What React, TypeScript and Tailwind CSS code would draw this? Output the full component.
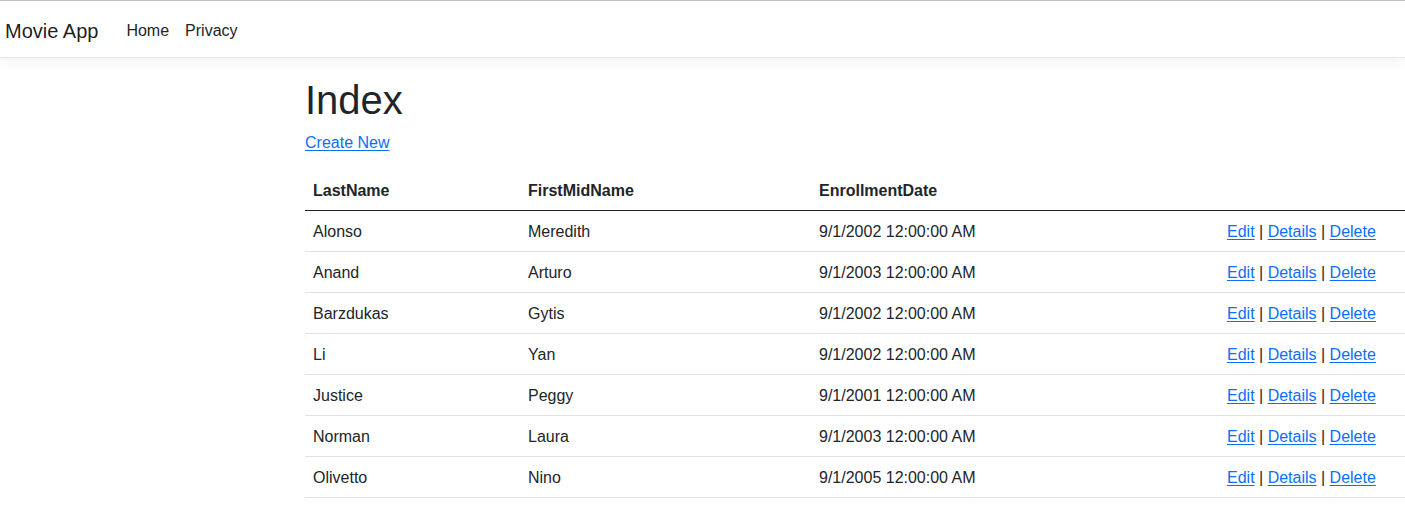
import React from "react";

const rows = [
  ["Alonso", "Meredith", "9/1/2002 12:00:00 AM"],
  ["Anand", "Arturo", "9/1/2003 12:00:00 AM"],
  ["Barzdukas", "Gytis", "9/1/2002 12:00:00 AM"],
  ["Li", "Yan", "9/1/2002 12:00:00 AM"],
  ["Justice", "Peggy", "9/1/2001 12:00:00 AM"],
  ["Norman", "Laura", "9/1/2003 12:00:00 AM"],
  ["Olivetto", "Nino", "9/1/2005 12:00:00 AM"],
];

export default function App() {
  return (
    <div
      className="min-h-[522px] w-[1405px] overflow-hidden bg-white text-[#212529] text-[16px] leading-[24px]"
      style={{ fontFamily: '"Liberation Sans", Arial, sans-serif' }}
    >
      <div className="h-px bg-[#c3c3c3]" />
      <nav className="flex h-[57px] items-center border-b border-[#e5e5e5] bg-white pt-[3px] shadow-[0_4px_12px_rgba(0,0,0,0.05)]">
        <a className="ml-[5px] mr-[20px] text-[20px] leading-[30px] text-[rgba(0,0,0,0.9)]">Movie App</a>
        <a className="px-[8px] text-[#212529]">Home</a>
        <a className="px-[8px] text-[#212529]">Privacy</a>
      </nav>
      <main className="ml-[305px] mt-[16px] w-[1296px]">
        <h1 className="mb-[6px] pt-[2px] text-[40px] leading-[48px] font-medium">Index</h1>
        <p className="mb-[15px] pt-[1px]">
          <a className="text-[#0d6efd] underline underline-offset-2">Create New</a>
        </p>
        <table className="w-[1296px] border-collapse text-left">
          <thead>
            <tr className="border-b border-[#212529]">
              <th className="w-[215px] px-[8px] pt-[9px] pb-[7px] font-bold">LastName</th>
              <th className="w-[291px] px-[8px] pt-[9px] pb-[7px] font-bold">FirstMidName</th>
              <th className="w-[408px] px-[8px] pt-[9px] pb-[7px] font-bold">EnrollmentDate</th>
              <th className="px-[8px] pt-[9px] pb-[7px]"></th>
            </tr>
          </thead>
          <tbody>
            {rows.map((r, i) => (
              <tr key={i} className="border-b border-[#dee2e6]">
                <td className="px-[8px] pt-[9px] pb-[7px]">{r[0]}</td>
                <td className="px-[8px] pt-[9px] pb-[7px]">{r[1]}</td>
                <td className="px-[8px] pt-[9px] pb-[7px]">{r[2]}</td>
                <td className="px-[8px] pt-[9px] pb-[7px]">
                  <a className="text-[#0d6efd] underline underline-offset-2">Edit</a> |{" "}
                  <a className="text-[#0d6efd] underline underline-offset-2">Details</a> |{" "}
                  <a className="text-[#0d6efd] underline underline-offset-2">Delete</a>
                </td>
              </tr>
            ))}
          </tbody>
        </table>
      </main>
    </div>
  );
}
